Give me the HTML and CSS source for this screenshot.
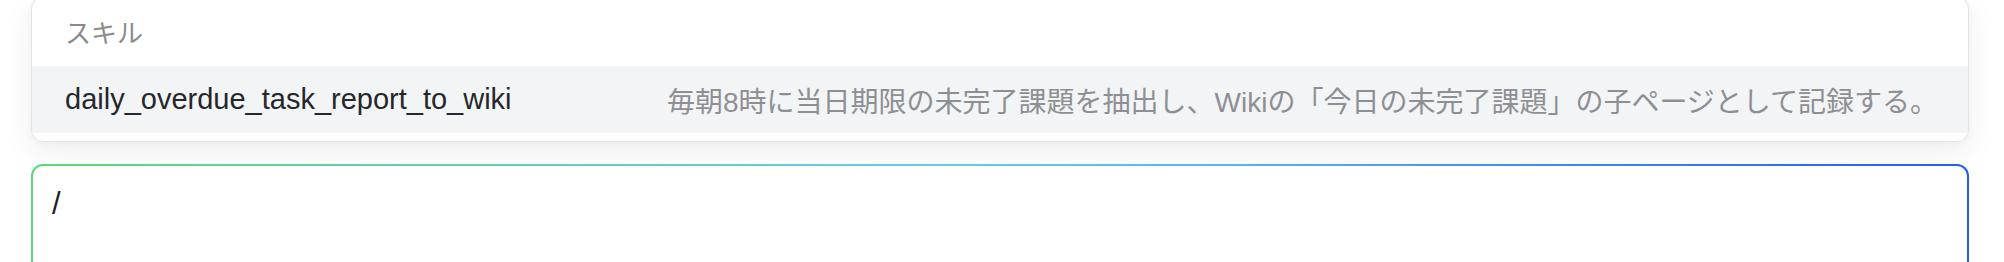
FILE: index.html
```html
<!DOCTYPE html>
<html lang="ja">
<head>
<meta charset="utf-8">
<link rel="stylesheet" href="styles.css">
</head>
<body>
<div class="page">
  <div class="menu">
    <div class="menu-header">スキル</div>
    <div class="menu-item">
      <span class="item-name">daily_overdue_task_report_to_wiki</span>
      <span class="item-desc">毎朝8時に当日期限の未完了課題を抽出し、Wikiの「今日の未完了課題」の子ページとして記録する。</span>
    </div>
  </div>
  <div class="composer">
    <div class="composer-text">/</div>
  </div>
</div>
</body>
</html>
```

FILE: styles.css
```css
html, body {
  margin: 0;
  padding: 0;
  background: #ffffff;
  overflow: hidden;
}
body {
  font-family: "Liberation Sans", "Noto Sans CJK JP", sans-serif;
}
.page {
  padding: 0 35px 0 31px;
  display: flex;
  flex-direction: column;
  gap: 22px;
}
.menu {
  margin-top: -3px;
  border: 1px solid #e3e3e7;
  border-radius: 12px;
  background: #ffffff;
  box-shadow: 0 10px 32px rgba(0, 0, 0, 0.07), 0 2px 6px rgba(0, 0, 0, 0.03);
  padding-bottom: 8px;
  overflow: hidden;
}
.menu-header {
  padding: 16px 33px 16px;
  font-family: "Noto Sans CJK JP", sans-serif;
  font-size: 26px;
  line-height: 36px;
  color: #8b8b8f;
}
.menu-item {
  display: flex;
  align-items: center;
  justify-content: space-between;
  height: 67px;
  padding: 0 30px 0 33px;
  background: #f3f4f6;
}
.item-name {
  font-size: 29px;
  color: #26272b;
  white-space: nowrap;
}
.item-desc {
  font-family: "Liberation Sans", "Noto Sans CJK JP", sans-serif;
  font-size: 28px;
  color: #8e8f93;
  white-space: nowrap;
}
.composer {
  height: 140px;
  border: 2px solid transparent;
  border-radius: 12px;
  background:
    linear-gradient(#ffffff, #ffffff) padding-box,
    linear-gradient(90deg, #5dd87a 0%, #5dd2bd 28%, #60cde6 48%, #58b4f4 62%, #3e86f2 80%, #2a5cf0 100%) border-box;
  padding: 18px 19px;
}
.composer-text {
  font-size: 31px;
  line-height: 40px;
  color: #1f1f22;
}
```
